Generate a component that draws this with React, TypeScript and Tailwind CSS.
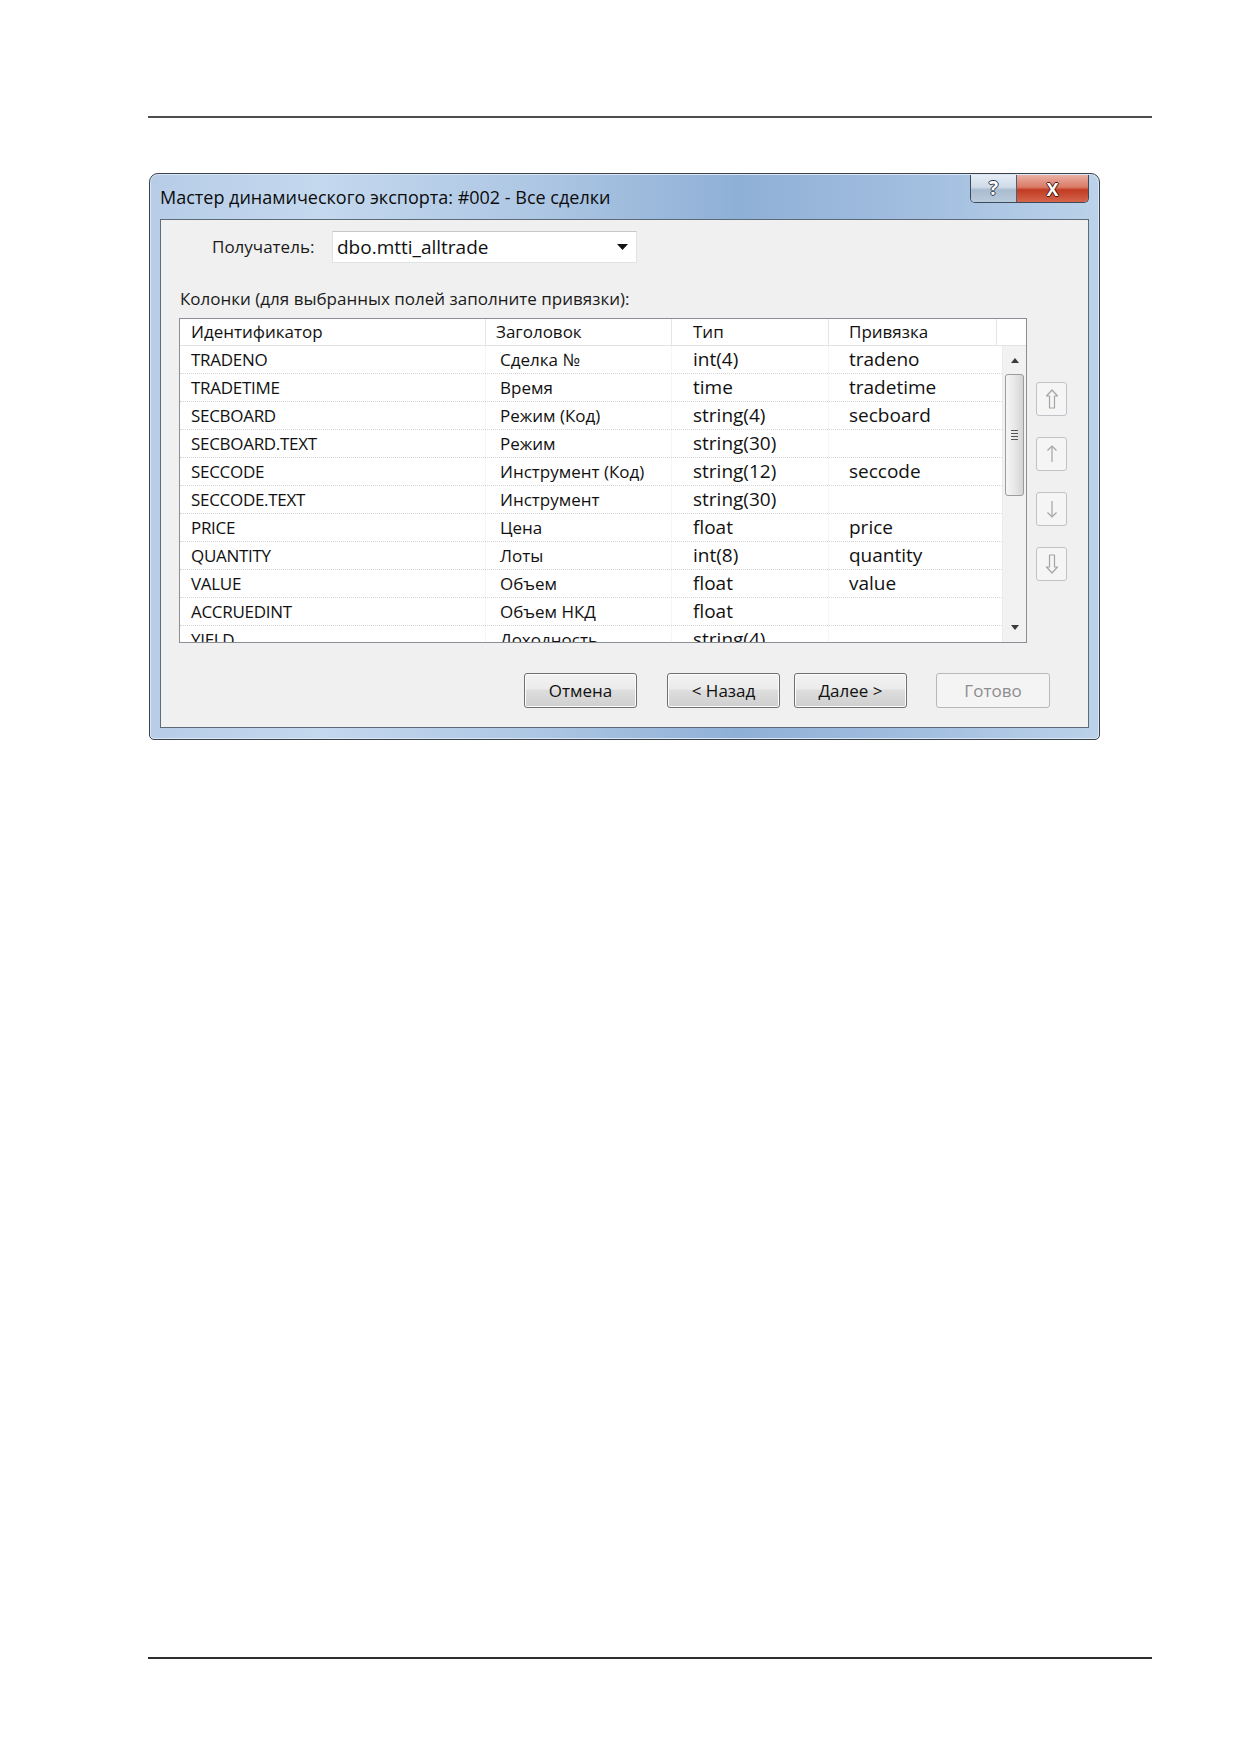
import React from "react";

type Field = {
	id: string;
	title: string;
	type: string;
	bind: string;
};

const fields: Field[] = [
	{ id: "TRADENO", title: "Сделка №", type: "int(4)", bind: "tradeno" },
	{ id: "TRADETIME", title: "Время", type: "time", bind: "tradetime" },
	{ id: "SECBOARD", title: "Режим (Код)", type: "string(4)", bind: "secboard" },
	{ id: "SECBOARD.TEXT", title: "Режим", type: "string(30)", bind: "" },
	{ id: "SECCODE", title: "Инструмент (Код)", type: "string(12)", bind: "seccode" },
	{ id: "SECCODE.TEXT", title: "Инструмент", type: "string(30)", bind: "" },
	{ id: "PRICE", title: "Цена", type: "float", bind: "price" },
	{ id: "QUANTITY", title: "Лоты", type: "int(8)", bind: "quantity" },
	{ id: "VALUE", title: "Объем", type: "float", bind: "value" },
	{ id: "ACCRUEDINT", title: "Объем НКД", type: "float", bind: "" },
	{ id: "YIELD", title: "Доходность", type: "string(4)", bind: "" },
];

const MoveIcon: React.FC<{ dir: "top" | "up" | "down" | "bottom" }> = ({ dir }) => {
	const flip = dir === "down" || dir === "bottom";
	return (
		<svg
			width="14"
			height="20"
			viewBox="0 0 14 20"
			className={flip ? "rotate-180" : ""}
			fill="none"
			stroke="#a4a4a4"
			strokeWidth="1.2"
		>
			{dir === "top" || dir === "bottom" ? (
				<path d="M7 1 L12.5 7 H9.5 V19 H4.5 V7 H1.5 Z" strokeLinejoin="round" />
			) : (
				<>
					<path d="M7 2 V18" />
					<path d="M2.5 6.5 L7 2 L11.5 6.5" />
				</>
			)}
		</svg>
	);
};

const DialogButton: React.FC<{ label: string; disabled?: boolean }> = ({ label, disabled }) => (
	<button
		className={
			disabled
				? "w-[114px] h-[35px] rounded-[3px] border border-[#b5b9bd] bg-[#f4f4f4] text-[17px] text-[#8d8d8d]"
				: "w-[113px] h-[35px] rounded-[3px] border border-[#707070] bg-[linear-gradient(180deg,#f3f3f3_0%,#ebebeb_45%,#dddddd_50%,#cfcfcf_100%)] text-[17px] text-[#111] shadow-[inset_0_0_0_1px_#fcfcfc]"
		}
	>
		{label}
	</button>
);

const App: React.FC = () => {
	return (
		<div className="min-h-[1754px] bg-white font-['Open_Sans','Noto_Sans',sans-serif] text-[#111]">
			<div className="pt-[116px] pl-[148px]">
				<div className="w-[1004px] h-[2px] bg-[#4d4d4d]" />

				{/* wizard window */}
				<div className="mt-[55px] ml-px w-[951px] h-[567px] flex flex-col rounded-t-[9px] rounded-b-[5px] border border-[#3a424b] bg-[linear-gradient(90deg,#b7cde7_0%,#c4d8ee_18%,#aec7e4_40%,#8fb0d6_62%,#a3bfe0_82%,#bcd2ea_100%)] px-[10px] pb-[11px] shadow-[inset_0_0_0_1px_#dbe7f4]">
					<div className="h-[45px] flex justify-between">
						<div className="flex items-center pt-px text-[18px] text-[#0c0c0c]">
							Мастер динамического экспорта: #002 - Все сделки
						</div>
						<div className="mt-px flex h-[28px] rounded-b-[5px] border border-t-0 border-[#3e4a58] overflow-hidden">
							<div className="w-[46px] flex items-center justify-center bg-[linear-gradient(180deg,#e5edf6_0%,#cfdbe8_45%,#a9bccf_55%,#b9cadc_100%)] border-r border-[#4f5d6c] text-[19px] leading-none font-bold text-white [text-shadow:1px_0_#2b3a4b,-1px_0_#2b3a4b,0_1px_#2b3a4b,0_-1px_#2b3a4b]">
								?
							</div>
							<div className="w-[71px] flex items-center justify-center bg-[linear-gradient(180deg,#e9b0a4_0%,#d97a66_45%,#c23a22_55%,#d5654d_100%)] text-[18px] leading-none font-bold text-white [text-shadow:1px_0_#4a1208,-1px_0_#4a1208,0_1px_#4a1208,0_-1px_#4a1208]">
								X
							</div>
						</div>
					</div>

					<div className="flex-1 flex flex-col bg-[#f0f0f0] border border-[#5d6b79]">
						{/* recipient */}
						<div className="mt-[11px] pl-[51px] flex items-center">
							<span className="w-[103px] text-[17px] text-[#1a1a1a]">Получатель:</span>
							<div className="ml-[17px] w-[305px] h-[32px] flex items-center justify-between bg-white border border-[#e2e2e2] border-t-[#c8c8c8] pl-[4px] pr-[8px]">
								<span className="text-[19px]">dbo.mtti_alltrade</span>
								<svg width="11" height="6" viewBox="0 0 11 6">
									<path d="M0 0 H11 L5.5 6 Z" fill="#111" />
								</svg>
							</div>
						</div>

						<div className="mt-[26px] pl-[19px] h-[20px] leading-[20px] text-[17px] text-[#1a1a1a]">
							Колонки (для выбранных полей заполните привязки):
						</div>

						<div className="mt-[9px] pl-[18px] flex">
							{/* columns list */}
							<div className="w-[848px] h-[325px] flex flex-col border border-[#8a8f96] bg-white overflow-hidden">
								<div className="h-[27px] shrink-0 flex items-center border-b border-[#e3e3e3] text-[17px]">
									<div className="w-[306px] h-full flex items-center pl-[11px] border-r border-[#e5e5e5]">Идентификатор</div>
									<div className="w-[186px] h-full flex items-center pl-[10px] border-r border-[#e5e5e5]">Заголовок</div>
									<div className="w-[157px] h-full flex items-center pl-[21px] border-r border-[#e5e5e5]">Тип</div>
									<div className="w-[168px] h-full flex items-center pl-[20px] border-r border-[#e5e5e5]">Привязка</div>
									<div className="flex-1" />
								</div>
								<div className="flex-1 flex min-h-0">
									<div className="w-[822px] overflow-hidden">
										{fields.map((f) => (
											<div
												key={f.id}
												className="h-[28px] flex items-center border-b border-dotted border-[#d6d6d6]"
											>
												<div className="w-[306px] h-full flex items-center pl-[11px] text-[17px] tracking-[-0.3px] border-r border-dotted border-[#ececec]">
													{f.id}
												</div>
												<div className="w-[186px] h-full flex items-center pl-[14px] text-[17px] border-r border-dotted border-[#ececec]">
													{f.title}
												</div>
												<div className="w-[157px] h-full flex items-center pl-[21px] text-[19px] border-r border-dotted border-[#ececec]">
													{f.type}
												</div>
												<div className="w-[173px] h-full flex items-center pl-[20px] text-[19px]">{f.bind}</div>
											</div>
										))}
									</div>
									{/* vertical scrollbar */}
									<div className="w-[24px] flex flex-col bg-[#f2f2f2] border-l border-[#ececec]">
										<div className="h-[28px] flex items-center justify-center">
											<svg width="8" height="5" viewBox="0 0 8 5">
												<path d="M0 5 L4 0 L8 5 Z" fill="#3c3c3c" />
											</svg>
										</div>
										<div className="mx-[2px] h-[122px] flex items-center justify-center rounded-[3px] border border-[#9c9c9c] bg-[linear-gradient(90deg,#f6f6f6_0%,#e8e8e8_50%,#d4d4d4_100%)]">
											<div className="flex flex-col gap-[2px]">
												<div className="w-[7px] h-px bg-[#555]" />
												<div className="w-[7px] h-px bg-[#555]" />
												<div className="w-[7px] h-px bg-[#555]" />
												<div className="w-[7px] h-px bg-[#555]" />
											</div>
										</div>
										<div className="flex-1" />
										<div className="h-[30px] flex items-center justify-center">
											<svg width="8" height="5" viewBox="0 0 8 5">
												<path d="M0 0 L8 0 L4 5 Z" fill="#3c3c3c" />
											</svg>
										</div>
									</div>
								</div>
							</div>

							{/* reorder buttons */}
							<div className="ml-[9px] pt-[64px] flex flex-col gap-[21px]">
								{(["top", "up", "down", "bottom"] as const).map((d) => (
									<div
										key={d}
										className="w-[31px] h-[34px] flex items-center justify-center rounded-[3px] border border-[#bfc3c7] bg-[#f5f5f5]"
									>
										<MoveIcon dir={d} />
									</div>
								))}
							</div>
						</div>

						<div className="mt-[30px] pr-[38px] flex justify-end">
							<DialogButton label="Отмена" />
							<div className="ml-[30px]">
								<DialogButton label="< Назад" />
							</div>
							<div className="ml-[14px]">
								<DialogButton label="Далее >" />
							</div>
							<div className="ml-[29px]">
								<DialogButton label="Готово" disabled />
							</div>
						</div>
					</div>
				</div>

				<div className="mt-[917px] w-[1004px] h-[2px] bg-[#2e2e2e]" />
			</div>
		</div>
	);
};

export default App;
